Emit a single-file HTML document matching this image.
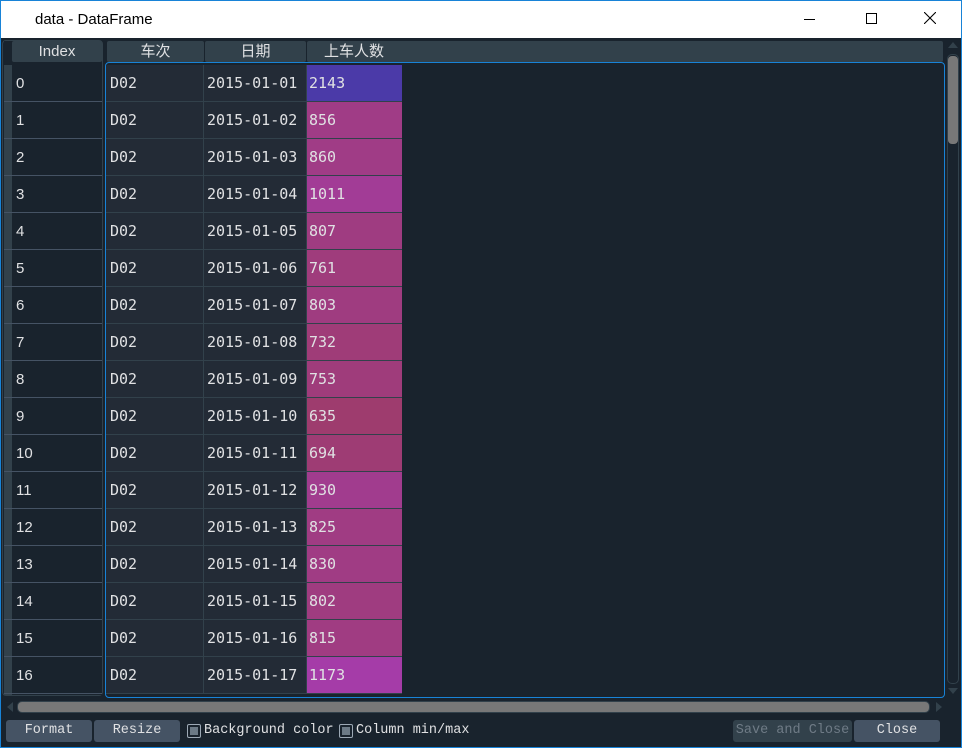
<!DOCTYPE html>
<html><head><meta charset="utf-8"><style>
*{margin:0;padding:0;box-sizing:border-box}
body{width:962px;height:748px;background:#19232d;position:relative;overflow:hidden;font-family:"Liberation Sans","Noto Sans CJK SC",sans-serif}
.a{position:absolute}
#frame{left:0;top:0;width:962px;height:748px;border:1px solid #1883d7;z-index:10;pointer-events:none}
#title{left:0;top:0;width:962px;height:38px;background:#fff;color:#000;font-size:15px}
.hd{position:absolute;top:41px;height:21px;background:#32414b;color:#e0e1e3;font-size:15px;text-align:center;line-height:21px;border-radius:2px}
.ir{position:absolute;left:4px;width:98px;height:37px;background:#19232d;border-bottom:1px solid #455364}
.ir i{position:absolute;left:0;top:0;width:8px;height:36px;background:#32414b}
.ir span{position:absolute;left:12px;top:10px;color:#e0e1e3;font-size:15px}
.row{position:absolute;left:106px;height:37px;font-family:"DejaVu Sans Mono","Liberation Mono",monospace;font-size:15px;color:#e0e1e3}
.c{position:absolute;top:0;height:36px;line-height:37px;background:#232b36;border-right:1px solid #32414b;padding-left:4px}
.c1{left:0;width:98px}.c2{left:98px;width:103px;padding-left:3px}.c3{left:201px;width:95px;border-right:none;padding-left:2px}
.row:after{content:"";position:absolute;left:0;top:36px;width:296px;height:1px;background:#32414b}
.btn{position:absolute;top:720px;height:22px;background:#455364;border-radius:3px;color:#e0e1e3;font-family:"Liberation Mono",monospace;font-size:13.5px;text-align:center;line-height:22px}
.cb{position:absolute;top:724px;width:14px;height:14px;border:1px solid #9da9b5;border-radius:2px;background:#19232d}
.cb:after{content:"";position:absolute;left:2px;top:2px;width:8px;height:8px;background:#6c7a86}
.lbl{position:absolute;top:722px;color:#e0e1e3;font-family:"Liberation Mono",monospace;font-size:13.5px;line-height:18px}
</style></head><body>
<div id="frame" class="a"></div>
<div id="title" class="a"><span class="a" style="left:35px;top:11px">data - DataFrame</span>
<div class="a" style="left:804px;top:19px;width:11px;height:1px;background:#000"></div>
<div class="a" style="left:866px;top:13px;width:11px;height:11px;border:1px solid #000"></div>
<svg class="a" style="left:924px;top:12px" width="12" height="12"><path d="M0 0L12 12M12 0L0 12" stroke="#000" stroke-width="1.1"/></svg>
</div>
<div class="a" style="left:2px;top:40px;width:101px;height:656px;border:1px solid #32414b;border-radius:4px"></div>
<div class="hd" style="left:4px;width:8px;border-radius:0;background:#19232d"></div>
<div class="hd" style="left:12px;width:90px">Index</div>
<div class="hd" style="left:107px;width:97px">车次</div>
<div class="hd" style="left:205px;width:101px">日期</div>
<div class="hd" style="left:307px;width:636px;text-align:left;padding-left:17px">上车人数</div>
<div class="a" style="left:105px;top:62px;width:840px;height:636px;border:1px solid #1883d7;border-radius:4px;overflow:hidden">
</div>
<div class="ir" style="top:65px"><i></i><span>0</span></div>
<div class="ir" style="top:102px"><i></i><span>1</span></div>
<div class="ir" style="top:139px"><i></i><span>2</span></div>
<div class="ir" style="top:176px"><i></i><span>3</span></div>
<div class="ir" style="top:213px"><i></i><span>4</span></div>
<div class="ir" style="top:250px"><i></i><span>5</span></div>
<div class="ir" style="top:287px"><i></i><span>6</span></div>
<div class="ir" style="top:324px"><i></i><span>7</span></div>
<div class="ir" style="top:361px"><i></i><span>8</span></div>
<div class="ir" style="top:398px"><i></i><span>9</span></div>
<div class="ir" style="top:435px"><i></i><span>10</span></div>
<div class="ir" style="top:472px"><i></i><span>11</span></div>
<div class="ir" style="top:509px"><i></i><span>12</span></div>
<div class="ir" style="top:546px"><i></i><span>13</span></div>
<div class="ir" style="top:583px"><i></i><span>14</span></div>
<div class="ir" style="top:620px"><i></i><span>15</span></div>
<div class="ir" style="top:657px"><i></i><span>16</span></div>
<div class="ir" style="top:694px;height:1px;border:none"><i style="height:1px"></i></div>

<div class="row" style="top:65px"><div class="c c1">D02</div><div class="c c2">2015-01-01</div><div class="c c3" style="background:#4b3aa8">2143</div></div>
<div class="row" style="top:102px"><div class="c c1">D02</div><div class="c c2">2015-01-02</div><div class="c c3" style="background:#a03c86">856</div></div>
<div class="row" style="top:139px"><div class="c c1">D02</div><div class="c c2">2015-01-03</div><div class="c c3" style="background:#a03c86">860</div></div>
<div class="row" style="top:176px"><div class="c c1">D02</div><div class="c c2">2015-01-04</div><div class="c c3" style="background:#a23c96">1011</div></div>
<div class="row" style="top:213px"><div class="c c1">D02</div><div class="c c2">2015-01-05</div><div class="c c3" style="background:#9f3c81">807</div></div>
<div class="row" style="top:250px"><div class="c c1">D02</div><div class="c c2">2015-01-06</div><div class="c c3" style="background:#9f3c7c">761</div></div>
<div class="row" style="top:287px"><div class="c c1">D02</div><div class="c c2">2015-01-07</div><div class="c c3" style="background:#9f3c80">803</div></div>
<div class="row" style="top:324px"><div class="c c1">D02</div><div class="c c2">2015-01-08</div><div class="c c3" style="background:#9f3c78">732</div></div>
<div class="row" style="top:361px"><div class="c c1">D02</div><div class="c c2">2015-01-09</div><div class="c c3" style="background:#9f3c7b">753</div></div>
<div class="row" style="top:398px"><div class="c c1">D02</div><div class="c c2">2015-01-10</div><div class="c c3" style="background:#9e3c6e">635</div></div>
<div class="row" style="top:435px"><div class="c c1">D02</div><div class="c c2">2015-01-11</div><div class="c c3" style="background:#9e3c74">694</div></div>
<div class="row" style="top:472px"><div class="c c1">D02</div><div class="c c2">2015-01-12</div><div class="c c3" style="background:#a13c8e">930</div></div>
<div class="row" style="top:509px"><div class="c c1">D02</div><div class="c c2">2015-01-13</div><div class="c c3" style="background:#a03c83">825</div></div>
<div class="row" style="top:546px"><div class="c c1">D02</div><div class="c c2">2015-01-14</div><div class="c c3" style="background:#a03c84">830</div></div>
<div class="row" style="top:583px"><div class="c c1">D02</div><div class="c c2">2015-01-15</div><div class="c c3" style="background:#9f3c80">802</div></div>
<div class="row" style="top:620px"><div class="c c1">D02</div><div class="c c2">2015-01-16</div><div class="c c3" style="background:#a03c82">815</div></div>
<div class="row" style="top:657px"><div class="c c1">D02</div><div class="c c2">2015-01-17</div><div class="c c3" style="background:#a53ca8">1173</div></div>
<div class="row" style="top:694px;height:3px;overflow:hidden"><div class="c c1"></div><div class="c c2"></div><div class="c c3" style="background:#a03c80"></div></div>

<div class="a" style="left:948px;top:42px;width:0;height:0;border-left:5px solid transparent;border-right:5px solid transparent;border-bottom:6px solid #32414b"></div>
<div class="a" style="left:947px;top:54px;width:12px;height:630px;border:1px solid #32414b;border-radius:5px"></div>
<div class="a" style="left:948px;top:56px;width:10px;height:88px;background:#787878;border-radius:4px"></div>
<div class="a" style="left:948px;top:688px;width:0;height:0;border-left:5px solid transparent;border-right:5px solid transparent;border-top:6px solid #32414b"></div>
<div class="a" style="left:7px;top:702px;width:0;height:0;border-top:5px solid transparent;border-bottom:5px solid transparent;border-right:6px solid #32414b"></div>
<div class="a" style="left:17px;top:701px;width:913px;height:12px;background:#787878;border:1px solid #32414b;border-radius:5px"></div>
<div class="a" style="left:936px;top:702px;width:0;height:0;border-top:5px solid transparent;border-bottom:5px solid transparent;border-left:6px solid #32414b"></div>
<div class="btn" style="left:6px;width:86px">Format</div>
<div class="btn" style="left:94px;width:86px">Resize</div>
<div class="cb" style="left:187px"></div>
<div class="lbl" style="left:204px">Background color</div>
<div class="cb" style="left:339px"></div>
<div class="lbl" style="left:356px">Column min/max</div>
<div class="btn" style="left:733px;width:119px;background:#32414b;color:#6f7b86">Save and Close</div>
<div class="btn" style="left:854px;width:86px">Close</div>
</body></html>
